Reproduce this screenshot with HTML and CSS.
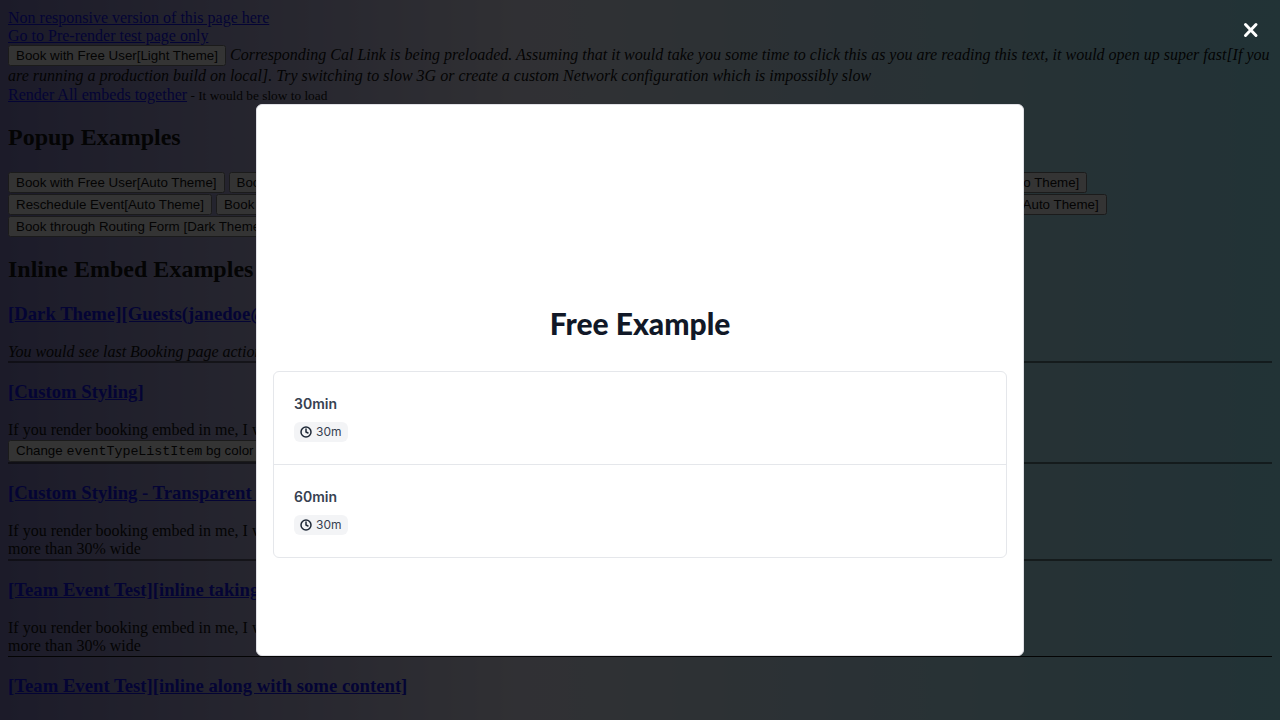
FILE: index.html
```html
<!DOCTYPE html>
<html lang="en">
<head>
<meta charset="utf-8">
<meta name="viewport" content="width=device-width, initial-scale=1">
<title>Embed Playground</title>
<link rel="stylesheet" href="styles.css">
</head>
<body>
<header class="intro">
  <div><a href="#non-responsive">Non responsive version of this page here</a></div>
  <div><a href="#prerender">Go to Pre-render test page only</a></div>
  <div class="preload"><button type="button">Book with Free User[Light Theme]</button>
  <i>Corresponding Cal Link is being preloaded. Assuming that it would take you some time to click this as you are reading this text, it would open up super fast[If you are running a production build on local]. Try switching to slow 3G or create a custom Network configuration which is impossibly slow</i></div>
  <div><a href="#all">Render All embeds together</a><small> - It would be slow to load</small></div>
</header>
<main>
  <h2>Popup Examples</h2>
  <div class="popups">
    <button type="button">Book with Free User[Auto Theme]</button>
    <button type="button">Book with Free User[Dark Theme]</button>
    <button type="button">Book with Test User[Light Theme]</button>
    <button type="button">Book with Test User[Light Theme]</button>
    <button type="button">Book Team Event[Auto Theme]</button>
    <button type="button">Reschedule Event[Auto Theme]</button>
    <button type="button">Book Paid Event[Auto Theme]</button>
    <button type="button">Book Event[Floating Theme]</button>
    <button type="button">Book Anonymous Event[Auto Theme]</button>
    <button type="button">Book through Routing Form [Auto Theme]</button>
    <button type="button">Book through Routing Form [Dark Theme]</button>
  </div>
  <h2>Inline Embed Examples</h2>
  <section class="example">
    <h3><a href="#dark">[Dark Theme][Guests(janedoe@example.com)]</a></h3>
    <i class="note">You would see last Booking page action in my place</i>
  </section>
  <section class="example">
    <h3><a href="#custom">[Custom Styling]</a></h3>
    <div>If you render booking embed in me, I won't restrict you.</div>
    <div class="action"><button type="button">Change <code>eventTypeListItem</code> bg color</button></div>
  </section>
  <section class="example">
    <h3><a href="#transparent">[Custom Styling - Transparent Background]</a></h3>
    <div class="text">If you render booking embed in me, I won't let you be<br>more than 30% wide</div>
  </section>
  <section class="example example-solid">
    <h3><a href="#team-full">[Team Event Test][inline taking entire width]</a></h3>
    <div class="text">If you render booking embed in me, I won't let you be<br>more than 30% wide</div>
  </section>
  <section>
    <h3><a href="#team-content">[Team Event Test][inline along with some content]</a></h3>
  </section>
</main>

<div class="backdrop">
  <button class="close" type="button" aria-label="Close">
    <svg width="16" height="16" viewBox="0 0 16 16" aria-hidden="true"><path d="M2.5 2.5 13 13.5M13 2.5 2.5 13.5"/></svg>
  </button>
  <div class="modal" role="dialog" aria-modal="true" aria-labelledby="modal-title">
    <h1 class="modal-title" id="modal-title">Free Example</h1>
    <div class="events">
      <a class="event" href="#30min">
        <span class="event-name">30min</span>
        <span class="badge"><svg class="clock" viewBox="0 0 24 24" aria-hidden="true"><circle cx="12" cy="12" r="10"/><path d="M12 6v6l4 2"/></svg>30m</span>
      </a>
      <a class="event" href="#60min">
        <span class="event-name">60min</span>
        <span class="badge"><svg class="clock" viewBox="0 0 24 24" aria-hidden="true"><circle cx="12" cy="12" r="10"/><path d="M12 6v6l4 2"/></svg>30m</span>
      </a>
    </div>
  </div>
</div>
</body>
</html>
```
FILE: styles.css
```css
html {
  min-height: 100%;
}
body {
  margin: 8px;
  overflow: hidden;
  font-family: "Liberation Serif", "Times New Roman", serif;
  font-size: 16px;
  line-height: 18px;
  color: #000;
  background: linear-gradient(90deg, #7874ba 0%, #ddddee 41%, #94e8f9 100%);
}
a {
  color: #0000ee;
}
button {
  font-family: "Liberation Sans", Arial, sans-serif;
}
code {
  font-family: "Liberation Mono", "Courier New", monospace;
}
.intro {
  padding-top: 1px;
}
.preload {
  line-height: 20px;
}
.popups {
  line-height: 22px;
}
h2 {
  margin: 18px 0 20px;
  font-size: 24px;
  line-height: 28px;
}
h3 {
  margin: 18px 0;
  line-height: 22px;
}
.example {
  border-bottom: 2px solid rgba(0, 0, 0, 0.5);
}
.example-solid {
  border-bottom: 1px solid #000;
}
.action {
  line-height: 21px;
}
.text {
  padding-bottom: 1px;
}
.backdrop {
  position: fixed;
  inset: 0;
  display: grid;
  place-items: center;
  padding-top: 40px;
  background: rgba(5, 5, 5, 0.8);
}
.close {
  position: absolute;
  top: 22px;
  right: 21px;
  display: flex;
  padding: 0;
  border: 0;
  background: none;
}
.close path {
  fill: none;
  stroke: #fff;
  stroke-width: 3;
  stroke-linecap: round;
}
.modal {
  box-sizing: border-box;
  width: 60%;
  padding: 200px 16px 97px;
  border: 1px solid #e1e1e6;
  border-radius: 6px;
  background: #fff;
  font-family: Inter, "Liberation Sans", sans-serif;
}
.modal-title {
  margin: 0 0 30px;
  font-family: Lato, Inter, sans-serif;
  font-size: 30px;
  font-weight: 900;
  line-height: 36px;
  text-align: center;
  color: #111827;
}
.events {
  border: 1px solid #e5e7eb;
  border-radius: 6px;
}
.event {
  display: flex;
  flex-direction: column;
  align-items: flex-start;
  gap: 8px;
  padding: 21px 20px 22px;
  color: #374151;
  text-decoration: none;
}
.event + .event {
  border-top: 1px solid #e5e7eb;
}
.event-name {
  font-size: 14px;
  font-weight: 600;
  line-height: 21px;
}
.badge {
  display: flex;
  align-items: center;
  gap: 4px;
  padding: 2px 6px;
  border-radius: 6px;
  background: #f3f4f6;
  font-size: 12px;
  line-height: 16px;
}
.clock {
  width: 12px;
  height: 12px;
  fill: none;
  stroke: #1f2937;
  stroke-width: 3;
  stroke-linecap: round;
  stroke-linejoin: round;
}
```
